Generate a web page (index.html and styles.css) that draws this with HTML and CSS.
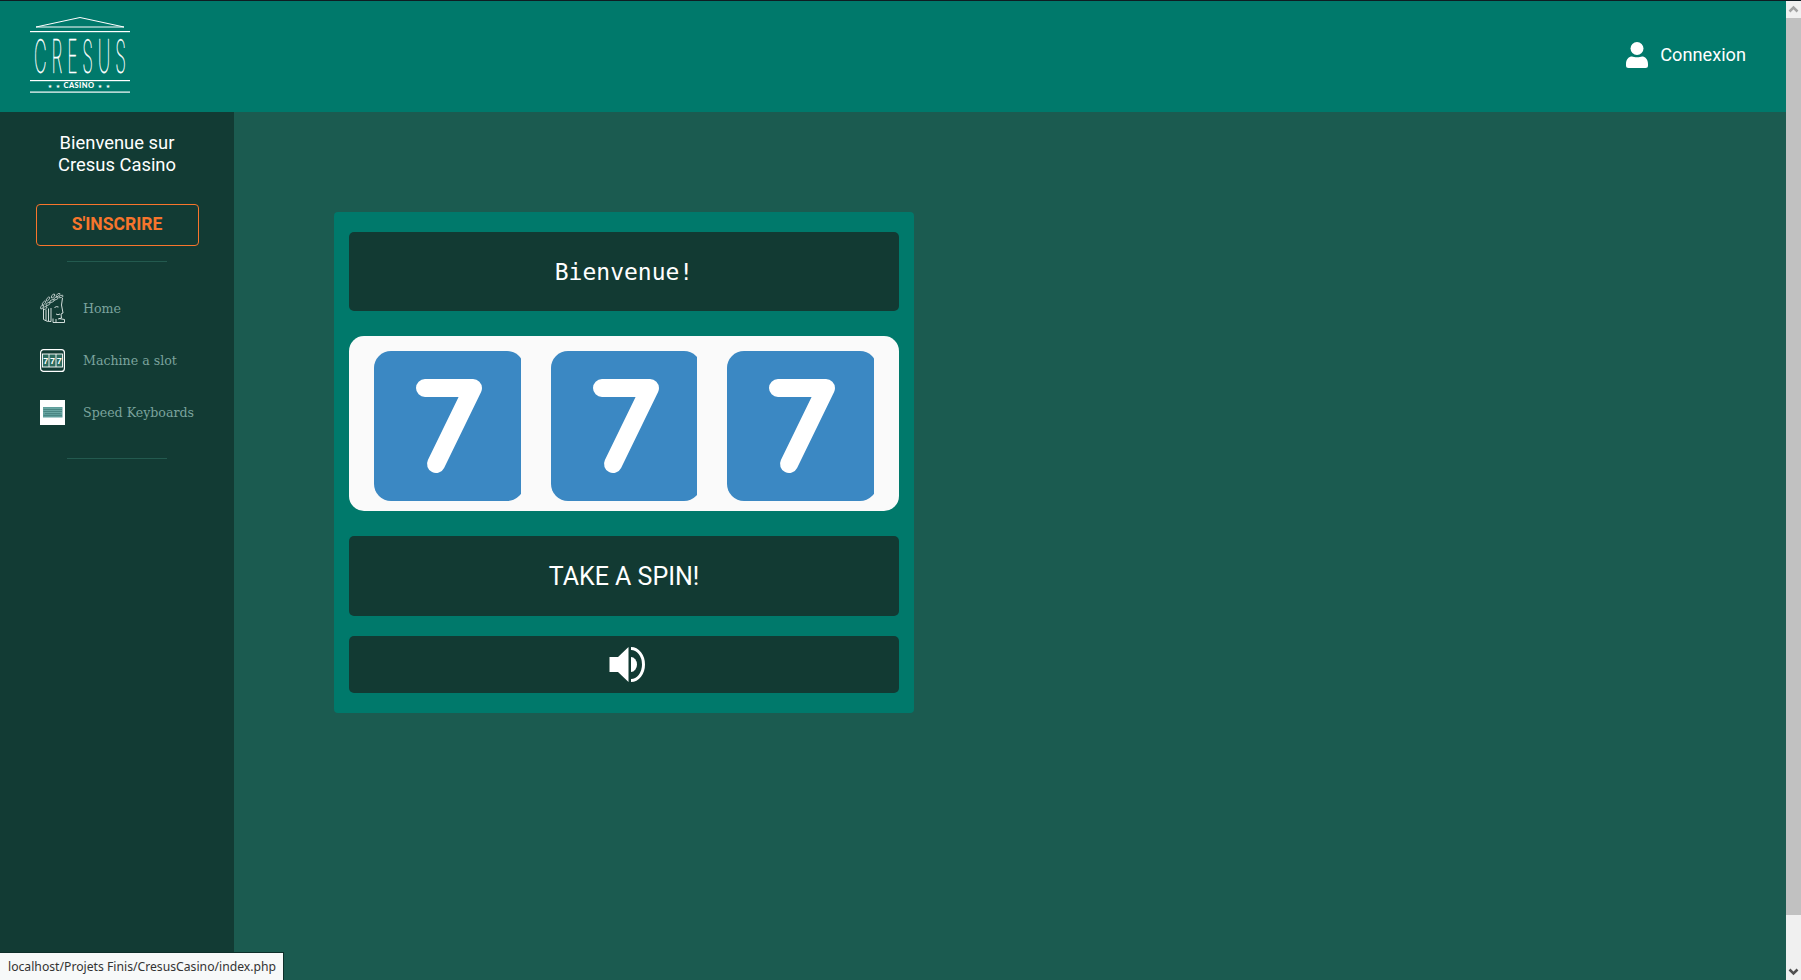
FILE: index.html
```html
<!DOCTYPE html>
<html lang="fr">
<head>
<meta charset="utf-8">
<title>Cresus Casino</title>
<link rel="stylesheet" href="styles.css">
</head>
<body>
<div class="page">
  <div class="app">
    <header class="topbar">
      <a class="logo" href="#">
        <svg width="100" height="76" viewBox="0 0 100 76">
          <path class="logo-roof" d="M6 10 L50 0.5 L94 10 Z"/>
          <rect class="logo-fill" x="0" y="14" width="100" height="1.2"/>
          <text class="logo-name" transform="translate(4 56) scale(0.38 1)" textLength="242" lengthAdjust="spacing">CRESUS</text>
          <rect class="logo-fill" x="0" y="63" width="100" height="1.2"/>
          <text class="logo-star" x="20" y="70.5" text-anchor="middle">★</text>
          <text class="logo-star" x="28" y="70.5" text-anchor="middle">★</text>
          <text class="logo-sub" x="49" y="70.8" text-anchor="middle">CASINO</text>
          <text class="logo-star" x="70" y="70.5" text-anchor="middle">★</text>
          <text class="logo-star" x="78" y="70.5" text-anchor="middle">★</text>
          <rect class="logo-fill" x="0" y="74.5" width="100" height="1.2"/>
        </svg>
      </a>
      <a class="login" href="#">
        <svg class="login-icon" width="22" height="26" viewBox="0 0 22 26">
          <circle cx="11" cy="6.5" r="6.5"/>
          <path d="M0 22 C0 17 3 14.5 6 14.5 C8 15.6 14 15.6 16 14.5 C19 14.5 22 17 22 22 L22 23.5 Q22 26 19.5 26 L2.5 26 Q0 26 0 23.5 Z"/>
        </svg>
        <span>Connexion</span>
      </a>
    </header>
    <div class="below">
      <aside class="sidebar">
        <p class="welcome">Bienvenue sur<br>Cresus Casino</p>
        <a class="signup" href="#">S'INSCRIRE</a>
        <hr class="rule">
        <nav class="nav">
          <a class="nav-item" href="#">
            <svg class="nav-icon" width="25" height="31" viewBox="0 0 25 31">
              <g class="leaf-icon">
                <ellipse cx="2" cy="14" rx="2.2" ry="1.1" transform="rotate(-60 2 14)"/>
                <ellipse cx="5" cy="15" rx="2.2" ry="1.1" transform="rotate(-30 5 15)"/>
                <ellipse cx="4" cy="10" rx="2.4" ry="1.1" transform="rotate(-50 4 10)"/>
                <ellipse cx="8" cy="11" rx="2.4" ry="1.1" transform="rotate(-30 8 11)"/>
                <ellipse cx="8" cy="6" rx="2.4" ry="1.1" transform="rotate(-50 8 6)"/>
                <ellipse cx="12" cy="8" rx="2.4" ry="1.1" transform="rotate(-25 12 8)"/>
                <ellipse cx="13" cy="3" rx="2.4" ry="1.1" transform="rotate(-55 13 3)"/>
                <ellipse cx="16" cy="5.5" rx="2.4" ry="1.1" transform="rotate(-25 16 5.5)"/>
                <ellipse cx="18" cy="2" rx="2.4" ry="1" transform="rotate(-40 18 2)"/>
                <ellipse cx="21" cy="3.5" rx="2.2" ry="1" transform="rotate(-20 21 3.5)"/>
              </g>
              <g class="stroke-icon">
                <path d="M22.5 5 L21.5 12 L23 20 L21 21 L21.5 25 L18 26"/>
                <path d="M14.5 14.5 Q16.5 13 18.5 14 M16 21 Q18 22.5 20 21"/>
                <path d="M3.5 16 V26.5 M6 16.5 V27.5 M8.5 15.5 V28 M11 15 V28.5"/>
                <path d="M3.5 26.5 Q7 29 11 28.5"/>
                <path d="M13 25.5 V29.5 H24.5 V26.5 L19 25.5 M16 26 V29.5"/>
              </g>
            </svg>
            <span>Home</span>
          </a>
          <a class="nav-item" href="#">
            <svg class="nav-icon" width="25" height="23" viewBox="0 0 25 23">
              <rect class="slot-frame" x="0.6" y="0.6" width="23.8" height="21.8" rx="3"/>
              <rect class="slot-panel" x="2.5" y="5" width="20" height="13"/>
              <path class="slot-panel" d="M9 5 V18 M16 5 V18"/>
              <text class="slot-digit" x="5.8" y="15" text-anchor="middle">7</text>
              <text class="slot-digit" x="12.5" y="15" text-anchor="middle">7</text>
              <text class="slot-digit" x="19.2" y="15" text-anchor="middle">7</text>
            </svg>
            <span>Machine a slot</span>
          </a>
          <a class="nav-item" href="#">
            <svg class="nav-icon" width="25" height="25" viewBox="0 0 25 25">
              <rect class="logo-fill" width="25" height="25"/>
              <rect class="key-body" x="3" y="7" width="19.5" height="10.5"/>
              <path class="key-lines" d="M3.5 9.5 H22 M3.5 11.5 H22 M5 13.5 H20.5 M3.5 15.5 H22"/>
              <path class="key-dots" d="M3.5 8.5 H22 M3.5 10.5 H22 M3.5 12.5 H22"/>
            </svg>
            <span>Speed Keyboards</span>
          </a>
        </nav>
        <hr class="rule">
      </aside>
      <main class="content">
        <section class="machine">
          <div class="message">Bienvenue!</div>
          <div class="reels">
            <svg class="reel" width="146.5" height="150" viewBox="0 0 146.5 150"><rect class="reel-bg" width="150" height="150" rx="17"/><path class="reel-seven" d="M51 37 H99 L62 113"/></svg>
            <svg class="reel" width="146.5" height="150" viewBox="0 0 146.5 150"><rect class="reel-bg" width="150" height="150" rx="17"/><path class="reel-seven" d="M51 37 H99 L62 113"/></svg>
            <svg class="reel" width="146.5" height="150" viewBox="0 0 146.5 150"><rect class="reel-bg" width="150" height="150" rx="17"/><path class="reel-seven" d="M51 37 H99 L62 113"/></svg>
          </div>
          <button class="spin" type="button">TAKE A SPIN!</button>
          <button class="sound" type="button">
            <svg width="37" height="35" viewBox="0 0 37 35">
              <path class="sound-fill" d="M0.5 10 H9 L19.5 0 V35 L9 25 H0.5 Z"/>
              <path class="sound-fill" d="M22 10 A6 7.5 0 0 1 22 25 Z"/>
              <path class="sound-wave" d="M22 1.5 A12.5 16 0 0 1 22 33.5"/>
            </svg>
          </button>
        </section>
      </main>
    </div>
  </div>
  <div class="scrollbar">
    <div class="scroll-btn"><svg width="15" height="17" viewBox="0 0 15 17"><path class="arrow-up" d="M3.5 10.5 L7.5 6.5 L11.5 10.5"/></svg></div>
    <div class="scroll-thumb"></div>
    <div class="scroll-track"></div>
    <div class="scroll-btn"><svg width="15" height="17" viewBox="0 0 15 17"><path class="arrow-down" d="M3.5 6.5 L7.5 10.5 L11.5 6.5"/></svg></div>
  </div>
  <div class="status">localhost/Projets Finis/CresusCasino/index.php</div>
</div>
</body>
</html>
```
FILE: styles.css
```css
* { box-sizing: border-box; }
html, body { margin: 0; height: 100%; overflow: hidden; }
body { font-family: Roboto, "Liberation Sans", sans-serif; color: #fff; background: #1b5b50; }
a { color: inherit; text-decoration: none; }

.page { position: relative; display: flex; height: 980px; border-top: 1px solid #0f1c22; }
.app { flex: 1; display: flex; flex-direction: column; min-width: 0; }

.topbar { height: 111px; flex: none; display: flex; align-items: center; justify-content: space-between; background: #00796b; padding: 0 40px 0 30px; }
.logo { display: block; height: 76px; margin-top: 16px; align-self: flex-start; }
.logo svg { display: block; }
.logo-roof { fill: none; stroke: #fff; stroke-width: 1; }
.logo-fill { fill: #fff; }
.logo-name { fill: #fff; stroke: #fff; stroke-width: 0.5; vector-effect: non-scaling-stroke; font-family: Inter, Lato, sans-serif; font-weight: 100; font-size: 46px; }
.logo-sub { fill: #fff; font-family: Lato, Roboto, sans-serif; font-weight: 900; font-size: 7.5px; letter-spacing: 0.4px; }
.logo-star { fill: #fff; font-family: "DejaVu Sans", sans-serif; font-size: 5px; }

.login { display: flex; align-items: center; gap: 12px; font-size: 18.2px; margin-top: -4px; margin-left: -2px; }
.login-icon { fill: #fff; display: block; }

.below { flex: 1; display: flex; min-height: 0; }
.sidebar { width: 234px; flex: none; background: #123b34; padding-top: 20px; display: flex; flex-direction: column; align-items: center; }
.welcome { margin: 0; font-size: 18.4px; line-height: 22px; text-align: center; }
.signup { display: flex; align-items: center; justify-content: center; width: 163px; height: 42px; margin-top: 28px; padding-bottom: 2px; border: 1.5px solid #f7752c; border-radius: 4px; color: #f7752c; font-size: 17.5px; font-weight: 700; }
.rule { width: 100px; height: 1px; margin: 15px 0 0; border: 0; background: #235a4f; flex: none; }

.nav { width: 100%; display: flex; flex-direction: column; padding: 20px 0 0 40px; margin-bottom: 5px; }
.nav-item { display: flex; align-items: center; gap: 18px; height: 52px; font-family: "Roboto Slab", "DejaVu Serif", serif; font-size: 12.6px; color: #7ba39d; }
.nav-icon { flex: none; display: block; }
.leaf-icon { fill: none; stroke: #e6eeec; stroke-width: 0.7; }
.stroke-icon { fill: none; stroke: #e6eeec; stroke-width: 0.9; }
.slot-frame { fill: none; stroke: #fff; stroke-width: 1.2; }
.slot-panel { fill: #2c6a5e; stroke: #fff; stroke-width: 0.9; }
.slot-digit { fill: #fff; font-family: "Liberation Sans", sans-serif; font-weight: 700; font-size: 9px; }
.key-body { fill: #5f9e9b; }
.key-lines { fill: none; stroke: #3d7674; stroke-width: 0.6; }
.key-dots { fill: none; stroke: #8fc2bf; stroke-width: 0.5; stroke-dasharray: 1 1; }

.content { flex: 1; padding: 100px 0 0 100px; }
.machine { width: 580px; padding: 20px 15px; background: #00796b; border-radius: 4px; display: flex; flex-direction: column; }
.message { height: 79px; display: flex; align-items: center; justify-content: center; border-radius: 5px; background: #123a33; font-family: "DejaVu Sans Mono", monospace; font-size: 23px; }
.reels { height: 175px; margin-top: 25px; padding: 15px 25px; display: flex; gap: 30px; border-radius: 15px; background: #fafafa; }
.reel { display: block; flex: none; }
.reel-bg { fill: #3b88c3; }
.reel-seven { fill: none; stroke: #fff; stroke-width: 18; stroke-linecap: round; stroke-linejoin: round; }
.spin, .sound { display: flex; align-items: center; justify-content: center; width: 100%; border: 0; padding: 0; border-radius: 5px; background: #123a33; color: #fff; font-family: Roboto, sans-serif; }
.spin { height: 80px; margin-top: 25px; font-size: 25px; }
.sound { height: 57px; margin-top: 20px; padding-left: 6px; }
.sound-fill { fill: #fff; }
.sound-wave { fill: none; stroke: #fff; stroke-width: 3; }

.scrollbar { width: 15px; flex: none; display: flex; flex-direction: column; background: #f0f0f0; }
.scroll-btn { height: 17px; flex: none; }
.scroll-btn svg { display: block; }
.arrow-up { fill: none; stroke: #a3a3a3; stroke-width: 2.5; }
.arrow-down { fill: none; stroke: #505050; stroke-width: 2.5; }
.scroll-thumb { height: 897px; flex: none; background: #c1c1c1; }
.scroll-track { flex: 1; }

.status { position: absolute; left: 0; bottom: 0; width: 284px; height: 28px; padding-left: 8px; padding-bottom: 1px; display: flex; align-items: center; background: #f7f9f9; border-top: 1px solid #0e2f2a; border-right: 1px solid #0e2f2a; color: #333; font-family: "Noto Sans", sans-serif; font-size: 12.2px; white-space: nowrap; }
```
